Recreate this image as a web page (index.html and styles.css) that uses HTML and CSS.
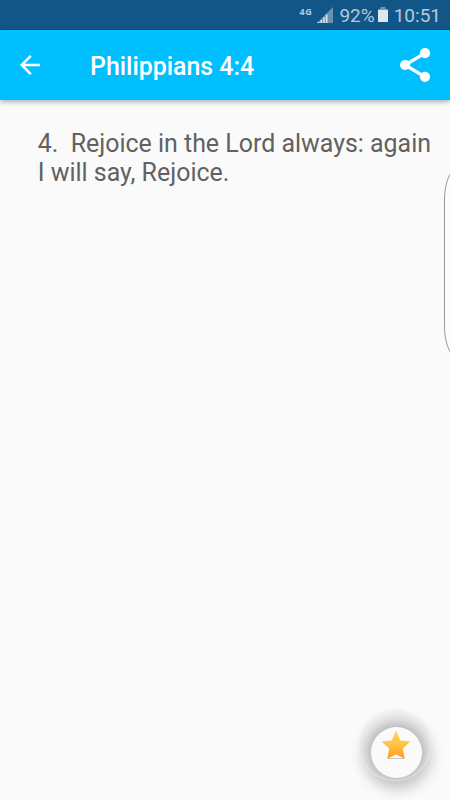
FILE: index.html
```html
<!DOCTYPE html>
<html lang="en">
<head>
<meta charset="utf-8">
<meta name="viewport" content="width=device-width, initial-scale=1">
<title>Philippians 4:4</title>
<link rel="stylesheet" href="styles.css">
</head>
<body>
<div class="screen">
  <div class="status-bar">
    <span class="network">4G</span>
    <svg class="signal" width="16" height="16" viewBox="0 0 16 16">
      <path d="M16 0V16H0Z" fill="#6792b4"/>
      <path d="M1 15h1.3v1H0zM3.5 13h1.5v3H3.5zM6.2 10.2h1.5V16H6.2zM8.8 7.5h1.6V16H8.8z" fill="#dce7ef"/>
    </svg>
    <span class="status-text">92%</span>
    <svg class="battery" width="10" height="15" viewBox="0 0 10 15">
      <path d="M2.500 0h5v2H10v13H0V2h2.500z" fill="#6f97b7"/>
      <path d="M0 3h10v12H0z" fill="#dce7ef"/>
    </svg>
    <span class="status-text">10:51</span>
  </div>
  <header class="app-bar">
    <button class="icon-button" aria-label="Back">
      <svg width="20" height="20" viewBox="0 0 20 20" fill="none" stroke="#fff" stroke-width="2.500">
        <path d="M20 10H2M10.800 .9L1.700 10l9.100 9.100"/>
      </svg>
    </button>
    <h1 class="title">Philippians 4:4</h1>
    <button class="icon-button" aria-label="Share">
      <svg width="30" height="34" viewBox="0 0 30 34" fill="#fff">
        <path d="M25 5.200L5 17l20 11.800" fill="none" stroke="#fff" stroke-width="3.300"/>
        <circle cx="25" cy="5.200" r="5.100"/><circle cx="5.100" cy="17" r="5.100"/><circle cx="25" cy="28.800" r="5.100"/>
      </svg>
    </button>
  </header>
  <main class="verse">
    <p>4.&nbsp; Rejoice in the Lord always: again<br>I will say, Rejoice.</p>
  </main>
  <div class="edge-handle"></div>
  <button class="fab" aria-label="Favorite">
    <span class="fab-face">
      <svg width="30" height="30" viewBox="0 0 30 30">
        <defs><linearGradient id="gold" x1="0" y1="0" x2="0" y2="1"><stop offset="0" stop-color="#ffd75a"/><stop offset=".5" stop-color="#ffc345"/><stop offset="1" stop-color="#ff9d1e"/></linearGradient></defs>
        <path d="M7 28.500h16.500" stroke="#999" stroke-opacity=".5"/>
        <path d="M15 .5l4.300 9.900 10.200 1-7.700 7 1.900 10.300-8.700-4.200-8.700 4.200 1.900-10.300-7.700-7 10.200-1z" fill="url(#gold)"/>
      </svg>
    </span>
  </button>
</div>
</body>
</html>
```
FILE: styles.css
```css
* { box-sizing: border-box; }
body { margin: 0; font-family: Roboto, "Liberation Sans", sans-serif; }
button { border: 0; padding: 0; background: none; display: block; }
svg { display: block; }
.screen {
  position: relative;
  display: flex;
  flex-direction: column;
  width: 450px;
  height: 800px;
  overflow: hidden;
  background: #fafafa;
}
.status-bar {
  display: flex;
  justify-content: flex-end;
  height: 30px;
  padding-right: 9px;
  background: #125688;
  border-bottom: 1px solid #104b80;
  color: #b4cbdc;
}
.network { font: 700 9px/12px "Open Sans", sans-serif; letter-spacing: .6px; margin: 6px 5px 0 0; }
.signal { margin: 7px 6px 0 0; }
.battery { margin: 7px 6px 0 3px; }
.status-text { font-size: 19px; line-height: 32px; }
.app-bar {
  display: flex;
  align-items: center;
  height: 70px;
  padding: 0 20px;
  background: #00bfff;
  box-shadow: 0 2px 5px rgba(0, 0, 0, .3);
}
.title {
  flex: 1;
  margin: 3px 0 0 50px;
  color: #fff;
  font-size: 24.900px;
  font-weight: 500;
  line-height: 30px;
}
.verse { padding: 29px 0 0 37.700px; }
.verse p { margin: 0; color: #616161; font-size: 24.950px; line-height: 29px; white-space: nowrap; }
.edge-handle {
  position: absolute;
  left: 444px;
  top: 170px;
  width: 30px;
  height: 186px;
  border: 1px solid #999;
  border-radius: 12px / 30px;
  background: #fdfdfd;
}
.fab {
  position: absolute;
  left: 359px;
  top: 709px;
  width: 72px;
  height: 72px;
  border-radius: 50%;
  background: radial-gradient(circle at 37.500px 43px, #bcbcbc 24px, #c8c8c8 27px, #dedede 33px, #eee 39px, #f6f6f6 44px);
  box-shadow: inset 0 0 1px 1px rgba(235, 235, 235, .4), 2px 10px 14px -2px rgba(0, 0, 0, .22);
}
.fab-face {
  display: flex;
  justify-content: center;
  width: 51px;
  height: 51px;
  margin: 15px 0 0 12px;
  padding: 3px 2px 0 0;
  border-radius: 50%;
  background: #fafafa;
}
```
